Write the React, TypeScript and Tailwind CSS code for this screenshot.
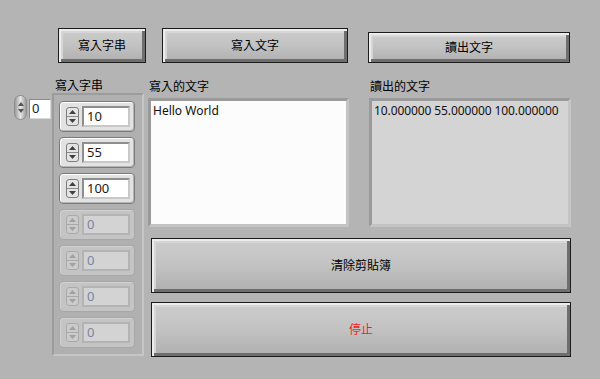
const font = { fontFamily: '"Noto Sans", "Noto Sans CJK TC", sans-serif' };

function LvButton({ label, className, red }: { label: string; className: string; red?: boolean }) {
  return (
    <div
      className={`flex items-center justify-center border border-[#1c1c1c] bg-gradient-to-b from-[#cdcdcd] via-[#c2c2c2] to-[#afafaf] text-[12px] shadow-[inset_2px_2px_0_#ececec,inset_-3px_-3px_0_#6e6e6e,inset_4px_4px_0_#d6d6d6] ${red ? "text-[#ff1a1a]" : "text-black"} ${className}`}
    >
      {label}
    </div>
  );
}

function Spinner({ disabled }: { disabled?: boolean }) {
  const arrow = disabled ? "#a0a0a0" : "#404040";
  return (
    <div
      className={`flex h-[19px] w-[13px] flex-col overflow-hidden rounded-[3px] border ${disabled ? "border-[#a9a9a9] bg-[#cbcbcb]" : "border-[#7d7d7d] bg-[#e4e4e4]"}`}
    >
      <div className={`flex flex-1 items-center justify-center border-b ${disabled ? "border-[#a9a9a9]" : "border-[#8a8a8a]"}`}>
        <svg width="7" height="4" viewBox="0 0 7 4">
          <path d="M0 4 L3.5 0 L7 4 Z" fill={arrow} />
        </svg>
      </div>
      <div className="flex flex-1 items-center justify-center">
        <svg width="7" height="4" viewBox="0 0 7 4">
          <path d="M0 0 L3.5 4 L7 0 Z" fill={arrow} />
        </svg>
      </div>
    </div>
  );
}

function Element({ value, disabled }: { value: string; disabled?: boolean }) {
  return (
    <div
      className={`flex h-[31px] w-[76px] items-center gap-[3px] rounded-[4px] border pl-[6px] ${disabled ? "border-[#a7a7a7] bg-[#c4c4c4] shadow-[inset_1px_1px_0_#d2d2d2]" : "border-[#7a7a7a] bg-[#e2e2e2] shadow-[inset_1px_1px_0_#ffffff,inset_-1px_-1px_0_#b5b5b5]"}`}
    >
      <Spinner disabled={disabled} />
      <div
        className={`flex h-[21px] w-[48px] items-center pl-[3px] text-[13px] ${disabled ? "border-2 border-[#b3b3b3] bg-[#d3d3d3] text-[#7c84a0]" : "border-2 border-t-[#8e8e8e] border-l-[#8e8e8e] border-r-[#c8c8c8] border-b-[#c8c8c8] bg-white text-[#1b1b1b]"}`}
      >
        {value}
      </div>
    </div>
  );
}

const elements = [
  { value: "10" },
  { value: "55" },
  { value: "100" },
  { value: "0", disabled: true },
  { value: "0", disabled: true },
  { value: "0", disabled: true },
  { value: "0", disabled: true },
];

export default function App() {
  return (
    <div className="h-[379px] w-[600px] overflow-hidden bg-[#b4b4b4] pt-[28px]" style={font}>
      {/* top buttons */}
      <div className="flex items-start">
        <LvButton label="寫入字串" className="ml-[58px] h-[35px] w-[88px]" />
        <LvButton label="寫入文字" className="ml-[16px] h-[35px] w-[186px]" />
        <LvButton label="讀出文字" className="ml-[20px] mt-[4px] h-[31px] w-[202px]" />
      </div>

      <div className="mt-[16px] flex items-start">
        {/* array index */}
        <div className="ml-[14px] mt-[16px] flex items-start">
          <div className="flex h-[25px] w-[13px] flex-col items-center justify-center gap-[3px] rounded-full border border-[#8c8c8c] bg-gradient-to-r from-[#9d9d9d] via-[#e6e6e6] to-[#9d9d9d]">
            <svg width="6" height="4" viewBox="0 0 6 4">
              <path d="M0 4 L3 0 L6 4 Z" fill="#555" />
            </svg>
            <svg width="6" height="4" viewBox="0 0 6 4">
              <path d="M0 0 L3 4 L6 0 Z" fill="#555" />
            </svg>
          </div>
          <div className="ml-[2px] mt-[4px] flex h-[20px] w-[22px] items-center border border-t-[#8a8a8a] border-l-[#8a8a8a] border-r-[#d8d8d8] border-b-[#d8d8d8] bg-white pl-[2px] text-[13px] text-[#1b1b1b]">
            0
          </div>
        </div>

        {/* array */}
        <div className="ml-[1px] flex w-[92px] flex-col">
          <div className="h-[14px] pl-[3px] text-[12px] leading-[14px] text-black">寫入字串</div>
          <div className="flex h-[263px] flex-col gap-[5px] border-2 border-t-[#9c9c9c] border-l-[#9c9c9c] border-r-[#c6c6c6] border-b-[#c6c6c6] bg-[#b0b0b0] pl-[5px] pt-[6px]">
            {elements.map((e, i) => (
              <Element key={i} value={e.value} disabled={e.disabled} />
            ))}
          </div>
        </div>

        {/* strings and buttons */}
        <div className="ml-[4px] flex w-[423px] flex-col">
          <div className="flex gap-[20px]">
            <div className="flex w-[201px] flex-col">
              <div className="h-[19px] pl-[1px] text-[12px] leading-[16px] text-black">寫入的文字</div>
              <div className="h-[129px] border-[3px] border-t-[#9a9a9a] border-l-[#9a9a9a] border-r-[#c4c4c4] border-b-[#c4c4c4] bg-[#fcfcfc] px-[2px] pt-[2px] text-[12px] leading-[16px] text-[#111]">
                Hello World
              </div>
            </div>
            <div className="flex w-[202px] flex-col">
              <div className="h-[19px] pl-[1px] text-[12px] leading-[16px] text-black">讀出的文字</div>
              <div className="h-[129px] whitespace-nowrap border-[3px] border-t-[#9a9a9a] border-l-[#9a9a9a] border-r-[#c4c4c4] border-b-[#c4c4c4] bg-[#d4d4d4] px-[2px] pt-[2px] text-[12px] leading-[16px] tracking-[-0.1px] text-[#111]">
                10.000000 55.000000 100.000000
              </div>
            </div>
          </div>
          <LvButton label="清除剪貼簿" className="ml-[3px] mt-[11px] h-[55px] w-[420px]" />
          <LvButton label="停止" red className="ml-[3px] mt-[9px] h-[55px] w-[420px]" />
        </div>
      </div>
    </div>
  );
}
